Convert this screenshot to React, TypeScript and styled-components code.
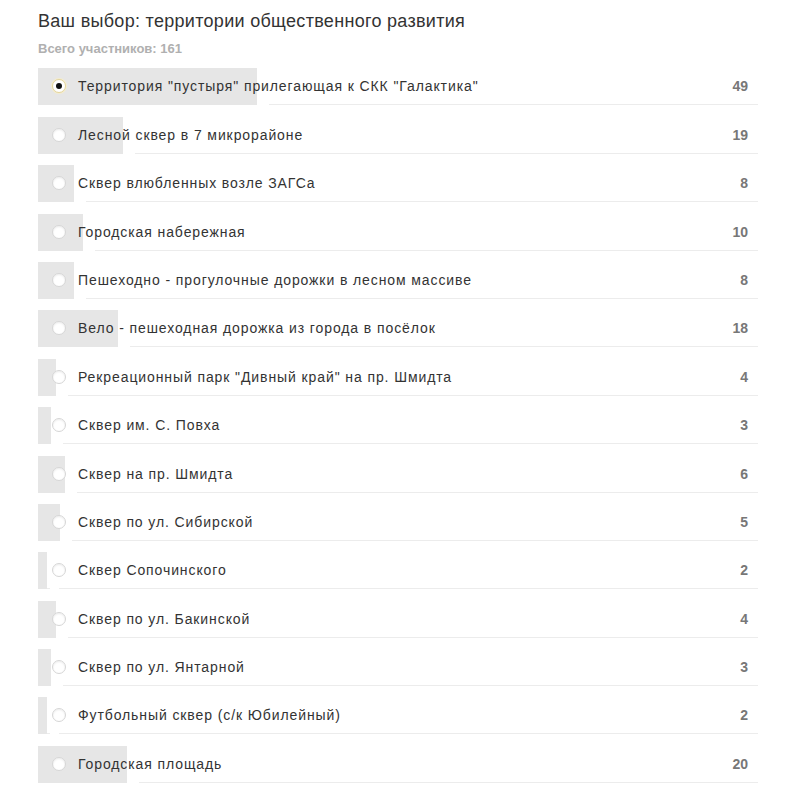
import styled, { createGlobalStyle } from 'styled-components';

const GlobalStyle = createGlobalStyle`
  body {
    margin: 0;
    background: #ffffff;
    font-family: "Liberation Sans", Arial, sans-serif;
  }
`;

const TOTAL = 161;

const options = [
  { title: 'Территория "пустыря" прилегающая к СКК "Галактика"', votes: 49, checked: true },
  { title: 'Лесной сквер в 7 микрорайоне', votes: 19 },
  { title: 'Сквер влюбленных возле ЗАГСа', votes: 8 },
  { title: 'Городская набережная', votes: 10 },
  { title: 'Пешеходно - прогулочные дорожки в лесном массиве', votes: 8 },
  { title: 'Вело - пешеходная дорожка из города в посёлок', votes: 18 },
  { title: 'Рекреационный парк "Дивный край" на пр. Шмидта', votes: 4 },
  { title: 'Сквер им. С. Повха', votes: 3 },
  { title: 'Сквер на пр. Шмидта', votes: 6 },
  { title: 'Сквер по ул. Сибирской', votes: 5 },
  { title: 'Сквер Сопочинского', votes: 2 },
  { title: 'Сквер по ул. Бакинской', votes: 4 },
  { title: 'Сквер по ул. Янтарной', votes: 3 },
  { title: 'Футбольный сквер (с/к Юбилейный)', votes: 2 },
  { title: 'Городская площадь', votes: 20 },
];

export default function App() {
  return (
    <>
      <GlobalStyle />
      <Poll>
        <Title>Ваш выбор: территории общественного развития</Title>
        <Total>Всего участников: {TOTAL}</Total>
        <List>
          {options.map((o) => (
            <Row key={o.title}>
              <Bar style={{ width: `${(o.votes / TOTAL) * 100}%` }} />
              <Radio checked={!!o.checked} />
              <Label>{o.title}</Label>
              <Count>{o.votes}</Count>
            </Row>
          ))}
        </List>
      </Poll>
    </>
  );
}

const Poll = styled.div`
  width: 720px;
  padding: 10px 0 0 38px;
`;

const Title = styled.div`
  font-size: 18px;
  line-height: 22px;
  letter-spacing: 0.3px;
  color: #333;
`;

const Total = styled.div`
  margin-top: 9px;
  font-size: 13px;
  line-height: 16px;
  font-weight: bold;
  color: #b0b0b0;
`;

const List = styled.div`
  margin-top: 7px;
`;

const Row = styled.div`
  position: relative;
  display: flex;
  align-items: center;
  height: 36px;
  margin-top: 11.4px;
  border-bottom: 1px solid #ececec;
`;

const Bar = styled.div`
  position: absolute;
  left: 0;
  top: 0;
  bottom: -1px;
  background: #e6e6e6;
  box-shadow: 12px 0 0 #ffffff;
`;

const Radio = styled.span<{ checked: boolean }>`
  position: relative;
  box-sizing: border-box;
  width: 14px;
  height: 14px;
  margin-left: 14px;
  border-radius: 50%;
  background: #fff;
  border: 1px solid ${({ checked }) => (checked ? '#e3d49a' : '#d6d6d6')};
  box-shadow: ${({ checked }) =>
    checked ? '0 0 0 1px #f3ecd0' : 'inset 0 1px 2px rgba(0, 0, 0, 0.08)'};
  display: flex;
  align-items: center;
  justify-content: center;

  &::after {
    content: '';
    display: ${({ checked }) => (checked ? 'block' : 'none')};
    width: 6px;
    height: 6px;
    border-radius: 50%;
    background: #111;
  }
`;

const Label = styled.span`
  position: relative;
  flex: 1;
  margin-left: 12px;
  font-size: 14px;
  letter-spacing: 0.9px;
  color: #333;
`;

const Count = styled.span`
  position: relative;
  margin-right: 10px;
  font-size: 14px;
  font-weight: bold;
  color: #777;
`;
